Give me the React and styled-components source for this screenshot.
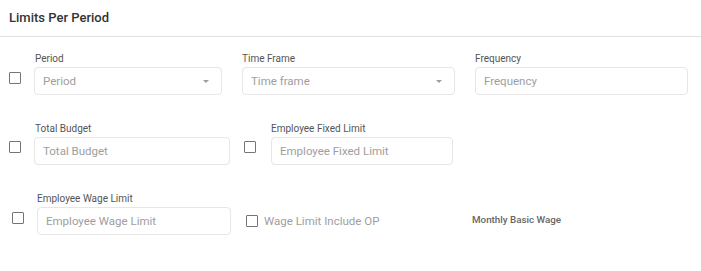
import React from 'react';
import styled, { createGlobalStyle } from 'styled-components';

const GlobalStyle = createGlobalStyle`
  body {
    margin: 0;
    background: #fff;
    font-family: Roboto, "Liberation Sans", sans-serif;
  }
`;

const Header = styled.div`
  height: 34px;
  display: flex;
  align-items: center;
  padding: 0 9px 2px;
  border-bottom: 1px solid #e0e0e0;
`;

const Title = styled.h2`
  margin: 0;
  font-size: 13px;
  font-weight: 500;
  color: #333;
`;

const Body = styled.div`
  padding: 16px 0 0 9px;
  display: flex;
  flex-direction: column;
  gap: 28px;
`;

const Row = styled.div`
  display: grid;
  grid-template-columns: ${(p) => p.cols};
  column-gap: ${(p) => p.gap || 0}px;
  align-items: end;
  padding-left: ${(p) => p.indent || 0}px;
`;

const Group = styled.div`
  display: flex;
  align-items: flex-end;
`;

const Check = styled.span`
  flex: none;
  width: 10px;
  height: 10px;
  border: 1px solid #757575;
  border-radius: 1px;
  margin-right: ${(p) => p.gap ?? 13}px;
  margin-bottom: ${(p) => p.bottom ?? 11}px;
`;

const Field = styled.div`
  flex: 1;
  display: flex;
  flex-direction: column;
`;

const Label = styled.label`
  font-size: 10px;
  font-weight: 400;
  color: #555;
  line-height: 12px;
  margin: 0 0 2px ${(p) => p.shift ?? 1}px;
`;

const Box = styled.div`
  height: 26px;
  border: 1px solid #e6e6e6;
  border-radius: 4px;
  display: flex;
  align-items: center;
  justify-content: space-between;
  padding: 0 12px 0 8px;
  font-size: 11.5px;
  color: #9e9e9e;
`;

const Arrow = styled.span`
  width: 0;
  height: 0;
  border-left: 3.5px solid transparent;
  border-right: 3.5px solid transparent;
  border-top: 3.5px solid #9e9e9e;
`;

const Inline = styled.div`
  display: flex;
  align-items: center;
  height: 28px;
  font-size: 11.5px;
  color: #9e9e9e;
`;

const Plain = styled.div`
  height: 24px;
  margin-bottom: 4px;
  display: flex;
  align-items: center;
  font-size: 9.8px;
  font-weight: 500;
  color: #666;
`;

const App = () => (
  <>
    <GlobalStyle />
    <Header>
      <Title>Limits Per Period</Title>
    </Header>
    <Body>
      <Row cols="213px 213px 213px" gap={20}>
        <Group>
          <Check />
          <Field>
            <Label>Period</Label>
            <Box>Period<Arrow /></Box>
          </Field>
        </Group>
        <Field>
          <Label shift={0}>Time Frame</Label>
          <Box>Time frame<Arrow /></Box>
        </Field>
        <Field>
          <Label shift={0}>Frequency</Label>
          <Box>Frequency</Box>
        </Field>
      </Row>
      <Row cols="221px 209px" gap={14}>
        <Group>
          <Check bottom={12} />
          <Field>
            <Label>Total Budget</Label>
            <Box>Total Budget</Box>
          </Field>
        </Group>
        <Group>
          <Check gap={15} bottom={12} />
          <Field>
            <Label shift={0}>Employee Fixed Limit</Label>
            <Box>Employee Fixed Limit</Box>
          </Field>
        </Group>
      </Row>
      <Row cols="219px 211px auto" gap={15} indent={3}>
        <Group>
          <Check bottom={11} />
          <Field>
            <Label shift={0}>Employee Wage Limit</Label>
            <Box>Employee Wage Limit</Box>
          </Field>
        </Group>
        <Inline>
          <Check gap={6} bottom={0} />
          Wage Limit Include OP
        </Inline>
        <Plain>Monthly Basic Wage</Plain>
      </Row>
    </Body>
  </>
);

export default App;
